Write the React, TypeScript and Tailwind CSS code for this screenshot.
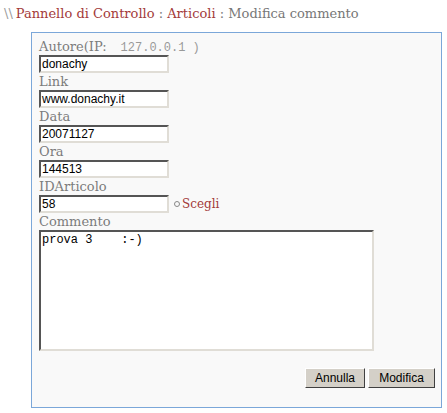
import React from "react";

const serif = { fontFamily: '"DejaVu Serif", Georgia, serif' };

function Field({ value }: { value: string }) {
  return (
    <div className="flex h-[18px] w-[130px] items-center border-2 border-t-[#555] border-l-[#555] border-r-[#e0ddd6] border-b-[#e0ddd6] bg-white pl-[1px] text-[12px] text-black leading-none" style={{ fontFamily: '"Liberation Sans", Arial, sans-serif' }}>
      {value}
    </div>
  );
}

function Label({ children }: { children: React.ReactNode }) {
  return (
    <div className="h-[17px] text-[13px] leading-[17px] text-[#7c7c7c] whitespace-nowrap" style={serif}>
      {children}
    </div>
  );
}

export default function App() {
  return (
    <div className="h-[413px] w-[447px] bg-white">
      <div className="h-[32px] pl-[4px] pt-[5px] text-[13px] leading-[18px] whitespace-nowrap" style={serif}>
        <span className="mr-[3px] text-[#999]">\\</span>
        <span className="text-[#a33a3a]">Pannello di Controllo</span>
        <span className="text-[#777]"> : </span>
        <span className="text-[#a33a3a]">Articoli</span>
        <span className="text-[#777]"> : Modifica commento</span>
      </div>
      <div className="ml-[31px] h-[376px] w-[411px] border border-[#7ba7d9] bg-[#f9f9f9] pl-[7px] pt-[5px] pr-[6px]">
        <Label>
          Autore(IP:
          <span className="ml-[14px] text-[12px] text-[#999]" style={{ fontFamily: '"Liberation Mono", "Courier New", monospace' }}>
            127.0.0.1 )
          </span>
        </Label>
        <Field value="donachy" />
        <Label>Link</Label>
        <Field value="www.donachy.it" />
        <Label>Data</Label>
        <Field value="20071127" />
        <Label>Ora</Label>
        <Field value="144513" />
        <Label>IDArticolo</Label>
        <div className="flex items-center">
          <Field value="58" />
          <span className="ml-[5px] mr-[2px] inline-block h-[6px] w-[6px] rounded-full border border-[#888]" />
          <span className="text-[12px] leading-[17px] text-[#a33a3a]" style={serif}>Scegli</span>
        </div>
        <Label>Commento</Label>
        <div
          className="h-[121px] w-[335px] border-2 border-t-[#555] border-l-[#555] border-r-[#e0ddd6] border-b-[#e0ddd6] bg-white pl-[1px] pt-[1px] text-[12px] leading-[14px] text-black whitespace-pre"
          style={{ fontFamily: '"Liberation Mono", "Courier New", monospace' }}
        >
          {"prova 3    :-)"}
        </div>
        <div className="mt-[17px] flex justify-end gap-[3px]">
          <button className="h-[20px] w-[60px] border border-t-white border-l-white border-r-[#404040] border-b-[#404040] bg-[#d4d0c8] text-[12px] text-black leading-none" style={{ fontFamily: '"Liberation Sans", Arial, sans-serif' }}>
            Annulla
          </button>
          <button className="h-[20px] w-[67px] border border-t-white border-l-white border-r-[#404040] border-b-[#404040] bg-[#d4d0c8] text-[12px] text-black leading-none" style={{ fontFamily: '"Liberation Sans", Arial, sans-serif' }}>
            Modifica
          </button>
        </div>
      </div>
    </div>
  );
}
